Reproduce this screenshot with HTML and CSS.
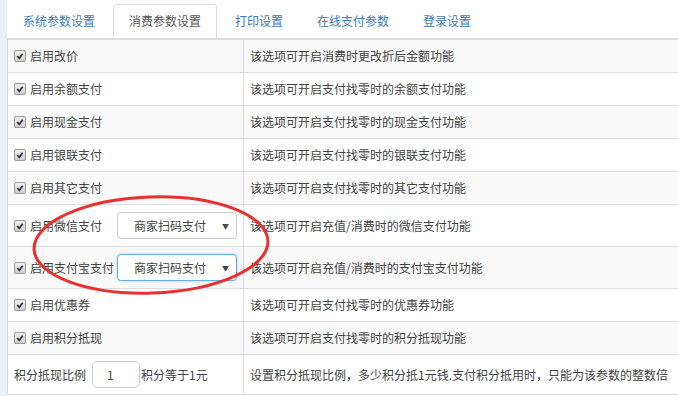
FILE: index.html
```html
<!DOCTYPE html>
<html lang="zh">
<head>
  <meta charset="UTF-8">
  <title>消费参数设置</title>
  <link rel="stylesheet" href="styles.css">
</head>
<body>

  <div class="panel">
    <ul class="nav-tabs">
      <li><a href="#">系统参数设置</a></li>
      <li class="active"><a href="#">消费参数设置</a></li>
      <li><a href="#">打印设置</a></li>
      <li><a href="#">在线支付参数</a></li>
      <li><a href="#">登录设置</a></li>
    </ul>

    <table class="param-table">
      <tbody>
        <tr>
          <td class="col-name"><span class="chk"><svg viewBox="0 0 13 13"><path d="M3 6.5 L5.5 9.5 L10 3.5" /></svg></span>启用改价</td>
          <td>该选项可开启消费时更改折后金额功能</td>
        </tr>
        <tr>
          <td class="col-name"><span class="chk"><svg viewBox="0 0 13 13"><path d="M3 6.5 L5.5 9.5 L10 3.5" /></svg></span>启用余额支付</td>
          <td>该选项可开启支付找零时的余额支付功能</td>
        </tr>
        <tr>
          <td class="col-name"><span class="chk"><svg viewBox="0 0 13 13"><path d="M3 6.5 L5.5 9.5 L10 3.5" /></svg></span>启用现金支付</td>
          <td>该选项可开启支付找零时的现金支付功能</td>
        </tr>
        <tr>
          <td class="col-name"><span class="chk"><svg viewBox="0 0 13 13"><path d="M3 6.5 L5.5 9.5 L10 3.5" /></svg></span>启用银联支付</td>
          <td>该选项可开启支付找零时的银联支付功能</td>
        </tr>
        <tr>
          <td class="col-name"><span class="chk"><svg viewBox="0 0 13 13"><path d="M3 6.5 L5.5 9.5 L10 3.5" /></svg></span>启用其它支付</td>
          <td>该选项可开启支付找零时的其它支付功能</td>
        </tr>
        <tr class="row-select">
          <td class="col-name">
            <div class="with-select">
              <span class="sel-label"><span class="chk"><svg viewBox="0 0 13 13"><path d="M3 6.5 L5.5 9.5 L10 3.5" /></svg></span>启用微信支付</span>
              <div class="select">商家扫码支付<span class="caret">▼</span></div>
            </div>
          </td>
          <td>该选项可开启充值/消费时的微信支付功能</td>
        </tr>
        <tr class="row-select">
          <td class="col-name">
            <div class="with-select">
              <span class="sel-label"><span class="chk"><svg viewBox="0 0 13 13"><path d="M3 6.5 L5.5 9.5 L10 3.5" /></svg></span>启用支付宝支付</span>
              <div class="select focus">商家扫码支付<span class="caret">▼</span></div>
            </div>
          </td>
          <td>该选项可开启充值/消费时的支付宝支付功能</td>
        </tr>
        <tr>
          <td class="col-name"><span class="chk"><svg viewBox="0 0 13 13"><path d="M3 6.5 L5.5 9.5 L10 3.5" /></svg></span>启用优惠券</td>
          <td>该选项可开启支付找零时的优惠券功能</td>
        </tr>
        <tr>
          <td class="col-name"><span class="chk"><svg viewBox="0 0 13 13"><path d="M3 6.5 L5.5 9.5 L10 3.5" /></svg></span>启用积分抵现</td>
          <td>该选项可开启支付找零时的积分抵现功能</td>
        </tr>
        <tr class="row-input">
          <td class="col-name">
            <div class="with-input">积分抵现比例<span class="num-input">1</span>积分等于1元</div>
          </td>
          <td>设置积分抵现比例，多少积分抵1元钱.支付积分抵用时，只能为该参数的整数倍</td>
        </tr>
      </tbody>
    </table>
  </div>

  <!-- red mark drawn over the two payment rows -->
  <svg class="mark" width="678" height="396" viewBox="0 0 678 396">
    <ellipse cx="151" cy="245" rx="117" ry="48" transform="rotate(-2 151 245)" />
  </svg>

</body>
</html>
```

FILE: styles.css
```css
body {
  margin: 0;
  background: #edf0f4;
  font-family: "Noto Sans CJK SC", "Noto Sans", sans-serif;
  font-size: 12px;
  color: #444;
  overflow: hidden;
}

.panel {
  margin-left: 7px;
  background: #fff;
  height: 396px;
}

.nav-tabs {
  list-style: none;
  margin: 0;
  padding: 4px 0 0 0;
  display: flex;
}

.nav-tabs li {
  margin-right: 2px;
}

.nav-tabs a {
  display: block;
  padding: 8px 15px 9px;
  line-height: 16px;
  border: 1px solid transparent;
  border-bottom: none;
  border-radius: 4px 4px 0 0;
  color: #3a7bbd;
  text-decoration: none;
}

.nav-tabs .active a {
  border-color: #ddd;
  color: #555;
}

.param-table {
  width: 100%;
  border-collapse: collapse;
  border-top: 2px solid #ddd;
}

.param-table td {
  padding: 8px 6px;
  line-height: 16px;
  border-bottom: 1px solid #ddd;
  border-left: 1px solid #ddd;
  white-space: nowrap;
  vertical-align: middle;
}

.param-table tr:nth-child(odd) td {
  background: #f9f9f9;
}

.col-name {
  width: 223px;
}

.chk {
  display: inline-block;
  width: 12px;
  height: 12px;
  margin-right: 4px;
  vertical-align: -1px;
  border: 1px solid #999;
  border-radius: 2px;
  background: linear-gradient(#f0f0f0, #d0d0d0);
  box-sizing: border-box;
}

.chk svg {
  display: block;
  width: 10px;
  height: 10px;
}

.chk path {
  fill: none;
  stroke: #333;
  stroke-width: 2.2;
}

.row-select td {
  padding-top: 7px;
  padding-bottom: 7px;
}

.with-select {
  display: flex;
  align-items: center;
}

.sel-label {
  width: 103px;
  flex-shrink: 0;
}

.select {
  width: 120px;
  height: 27px;
  box-sizing: border-box;
  border: 1px solid #ccc;
  border-radius: 4px;
  padding-left: 16px;
  display: flex;
  align-items: center;
  position: relative;
  background: #fff;
}

.select.focus {
  border-color: #66afe9;
  box-shadow: 0 0 3px rgba(102, 175, 233, 0.6);
}

.caret {
  position: absolute;
  right: 7px;
  top: 5px;
  font-size: 7px;
  color: #444;
}

.row-input td {
  padding-top: 6px;
  padding-bottom: 6px;
}

.with-input {
  display: flex;
  align-items: center;
}

.num-input {
  width: 48px;
  height: 27px;
  box-sizing: border-box;
  margin: 0 1px 0 6px;
  padding-left: 14px;
  border: 1px solid #ccc;
  border-radius: 6px;
  background: #fff;
  display: flex;
  align-items: center;
}

.mark {
  position: absolute;
  left: 0;
  top: 0;
  pointer-events: none;
}

.mark ellipse {
  fill: none;
  stroke: #e8302f;
  stroke-width: 3;
}
```
